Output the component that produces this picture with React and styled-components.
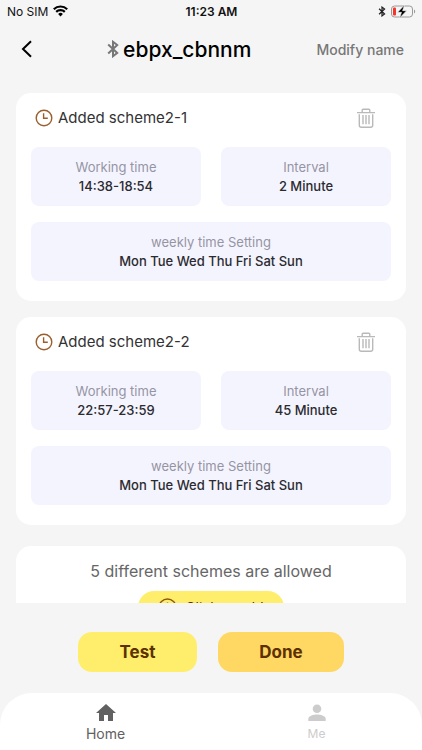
import React from 'react';
import styled, { createGlobalStyle } from 'styled-components';

const GlobalStyle = createGlobalStyle`
  * {
    box-sizing: border-box;
  }
  body {
    margin: 0;
    background-color: #f5f5f5;
    font-family: Inter, "Noto Sans", sans-serif;
  }
  button {
    font-family: inherit;
    border: none;
    padding: 0;
    background-color: transparent;
    cursor: pointer;
  }
`;

const Screen = styled.div`
  display: flex;
  flex-direction: column;
  height: 100vh;
  overflow: hidden;
`;

const StatusBar = styled.div`
  display: grid;
  grid-template-columns: 1fr auto 1fr;
  align-items: center;
  height: 22px;
  padding: 0 6px 0 7px;
  font-size: 12px;
  color: #111111;
`;

const StatusGroup = styled.div`
  display: flex;
  align-items: center;
  gap: 5px;
  justify-content: ${({ $end }) => ($end ? 'flex-end' : 'flex-start')};
`;

const Clock = styled.span`
  font-weight: 600;
`;

const Header = styled.header`
  display: flex;
  align-items: center;
  justify-content: space-between;
  height: 56px;
  flex-shrink: 0;
  padding: 0 18px 2px;
`;

const BackButton = styled.button`
  display: flex;
  width: 24px;
`;

const Title = styled.h1`
  display: flex;
  align-items: center;
  gap: 4px;
  margin: 0;
  font-size: 21px;
  font-weight: 500;
  color: #000000;
`;

const ModifyButton = styled.button`
  font-size: 14px;
  font-weight: 500;
  color: #777777;
`;

const List = styled.main`
  display: flex;
  flex-direction: column;
  flex: 1;
  min-height: 0;
  gap: 16px;
  padding: 15px 16px 0;
  overflow: hidden;
`;

const Card = styled.section`
  flex-shrink: 0;
  padding: 0 15px 20px;
  border-radius: 15px;
  background-color: #ffffff;
`;

const CardHeader = styled.div`
  display: flex;
  align-items: center;
  gap: 5px;
  height: 54px;
  padding: 0 16px 5px 4px;
`;

const CardTitle = styled.h2`
  flex: 1;
  margin: 0;
  font-size: 15px;
  font-weight: 400;
  color: #333333;
`;

const DeleteButton = styled.button`
  display: flex;
`;

const InfoGrid = styled.dl`
  display: grid;
  grid-template-columns: 1fr 1fr;
  gap: 16px 20px;
  margin: 0;
`;

const InfoItem = styled.div`
  display: flex;
  flex-direction: column;
  align-items: center;
  justify-content: center;
  height: 59px;
  border-radius: 8px;
  background-color: #f4f4ff;
  grid-column: ${({ $wide }) => ($wide ? '1 / -1' : 'auto')};
`;

const InfoLabel = styled.dt`
  font-size: 13px;
  line-height: 19px;
  color: #9694a3;
`;

const InfoValue = styled.dd`
  margin: 0;
  font-size: 13px;
  font-weight: 500;
  line-height: 19px;
  color: #2b2b2f;
`;

const AddCard = styled(Card)`
  display: flex;
  flex-direction: column;
  align-items: center;
  gap: 8px;
  margin-top: 5px;
  padding-top: 13px;
`;

const AddHint = styled.p`
  margin: 0;
  font-size: 16px;
  line-height: 24px;
  color: #666666;
`;

const AddButton = styled.button`
  display: flex;
  align-items: center;
  justify-content: center;
  gap: 8px;
  width: 146px;
  height: 32px;
  border-radius: 16px;
  background-color: #ffee6b;
  font-size: 14px;
  color: #5c3000;
`;

const Actions = styled.div`
  display: flex;
  justify-content: center;
  flex-shrink: 0;
  gap: 21px;
  padding: 29px 0 21px;
`;

const ActionButton = styled.button`
  width: ${({ $primary }) => ($primary ? '126px' : '119px')};
  height: 40px;
  border-radius: 14px;
  background-color: ${({ $primary }) => ($primary ? '#ffd763' : '#ffee6b')};
  font-size: 17px;
  font-weight: 700;
  color: #5c3000;
`;

const TabBar = styled.nav`
  display: grid;
  grid-template-columns: 1fr 1fr;
  flex-shrink: 0;
  height: 57px;
  padding-top: 8px;
  border-radius: 32px 32px 0 0;
  background-color: #ffffff;
`;

const Tab = styled.a`
  display: flex;
  flex-direction: column;
  align-items: center;
  text-decoration: none;
  font-size: ${({ $active }) => ($active ? '14px' : '12px')};
  line-height: 18px;
  color: ${({ $active }) => ($active ? '#616161' : '#cccccc')};
`;

const WifiIcon = () => (
  <svg width="15" height="12" viewBox="0 0 15 12" fill="none" stroke="#000" strokeWidth="2.2">
    <path d="M0.8 4.2a9.6 9.6 0 0 1 13.4 0" />
    <path d="M3.2 6.9a6.1 6.1 0 0 1 8.6 0" />
    <path d="M7.5 11.6 5.1 9a3.5 3.5 0 0 1 4.8 0z" fill="#000" stroke="none" />
  </svg>
);

const BluetoothIcon = ({ width, height, color, strokeWidth }) => (
  <svg width={width} height={height} viewBox="0 0 12 18" fill="none" stroke={color} strokeWidth={strokeWidth}>
    <path d="M1.2 4.6 10.2 13 6 16.2V1.8l4.2 3.2-9 8.4" />
  </svg>
);

const BatteryIcon = () => (
  <svg width="25" height="13" viewBox="0 0 25 13">
    <rect x="0.5" y="1" width="21" height="11" rx="3" fill="none" stroke="#9a9a9a" />
    <path d="M23 4.5c1.6.5 1.6 3.5 0 4z" fill="#9a9a9a" />
    <rect x="2" y="2.5" width="3" height="8" rx="1" fill="#f5352c" />
    <path d="M13.5 0 6.6 7.3h3.9L8.6 13l7-7.3h-4z" fill="#000" stroke="#f5f5f5" strokeWidth="0.6" />
  </svg>
);

const BackIcon = () => (
  <svg width="16" height="18" viewBox="0 0 16 18" fill="none" stroke="#000" strokeWidth="2">
    <path d="M13 1.2 5 9l8 7.8" />
  </svg>
);

const ClockIcon = () => (
  <svg width="18" height="18" viewBox="0 0 18 18" fill="none" stroke="#9a5f2c" strokeWidth="1.4">
    <circle cx="9" cy="9" r="7.8" />
    <path d="M8.6 4.2v5h4.2" />
  </svg>
);

const TrashIcon = () => (
  <svg width="18" height="20" viewBox="0 0 18 20" fill="none" stroke="#b9b9b9" strokeWidth="1.4">
    <path d="M0 4.6h18M5.2 4.4V2.2q0-1 1-1h5.6q1 0 1 1v2.2" />
    <path d="M2.3 6.2v11q0 2 2 2h9.4q2 0 2-2v-11M6 7v9.2M9 7v9.2M12 7v9.2" />
  </svg>
);

const PlusIcon = () => (
  <svg width="19" height="19" viewBox="0 0 19 19" fill="none" stroke="#8a5a10" strokeWidth="1.4">
    <circle cx="9.5" cy="9.5" r="8.5" />
    <path d="M9.5 4.6v9.8M4.6 9.5h9.8" />
  </svg>
);

const HomeIcon = () => (
  <svg width="24" height="24" viewBox="0 0 24 24" fill="#616161">
    <path d="M10 20v-6h4v6h5v-8h3L12 3 2 12h3v8z" />
  </svg>
);

const PersonIcon = () => (
  <svg width="24" height="24" viewBox="0 0 24 24" fill="#cccccc">
    <circle cx="12" cy="7.8" r="4.3" />
    <path d="M3.3 20v-2.2c0-2.8 5.6-4.2 8.7-4.2s8.7 1.4 8.7 4.2V20z" />
  </svg>
);

const schemes = [
  { name: 'Added scheme2-1', time: '14:38-18:54', interval: '2 Minute', days: 'Mon Tue Wed Thu Fri Sat Sun' },
  { name: 'Added scheme2-2', time: '22:57-23:59', interval: '45 Minute', days: 'Mon Tue Wed Thu Fri Sat Sun' },
];

const Info = ({ label, value, wide }) => (
  <InfoItem $wide={wide}>
    <InfoLabel>{label}</InfoLabel>
    <InfoValue>{value}</InfoValue>
  </InfoItem>
);

const Scheme = ({ scheme }) => (
  <Card>
    <CardHeader>
      <ClockIcon />
      <CardTitle>{scheme.name}</CardTitle>
      <DeleteButton aria-label="Delete">
        <TrashIcon />
      </DeleteButton>
    </CardHeader>
    <InfoGrid>
      <Info label="Working time" value={scheme.time} />
      <Info label="Interval" value={scheme.interval} />
      <Info label="weekly time Setting" value={scheme.days} wide />
    </InfoGrid>
  </Card>
);

const App = () => {
  return (
    <Screen>
      <GlobalStyle />
      <StatusBar>
        <StatusGroup>
          No SIM
          <WifiIcon />
        </StatusGroup>
        <Clock>11:23 AM</Clock>
        <StatusGroup $end>
          <BluetoothIcon width={8} height={11} color="#222" strokeWidth={2} />
          <BatteryIcon />
        </StatusGroup>
      </StatusBar>

      <Header>
        <BackButton aria-label="Back">
          <BackIcon />
        </BackButton>
        <Title>
          <BluetoothIcon width={12} height={18} color="#777" strokeWidth={2} />
          ebpx_cbnnm
        </Title>
        <ModifyButton>Modify name</ModifyButton>
      </Header>

      <List>
        {schemes.map((scheme) => (
          <Scheme key={scheme.name} scheme={scheme} />
        ))}
        <AddCard>
          <AddHint>5 different schemes are allowed</AddHint>
          <AddButton>
            <PlusIcon />
            Click to add
          </AddButton>
        </AddCard>
      </List>

      <Actions>
        <ActionButton>Test</ActionButton>
        <ActionButton $primary>Done</ActionButton>
      </Actions>

      <TabBar>
        <Tab href="#home" $active>
          <HomeIcon />
          Home
        </Tab>
        <Tab href="#me">
          <PersonIcon />
          Me
        </Tab>
      </TabBar>
    </Screen>
  );
};

export default App;
